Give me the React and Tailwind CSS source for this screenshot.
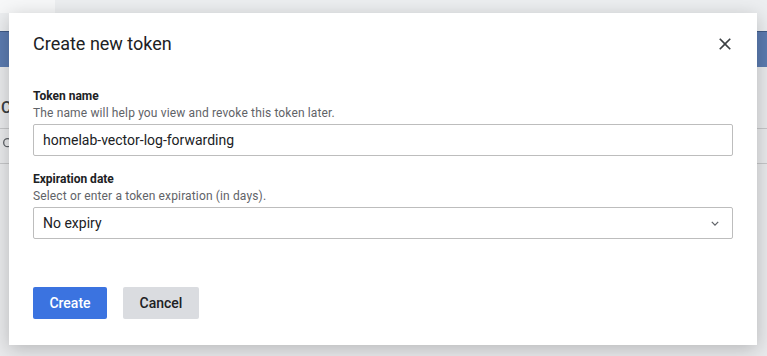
import React from 'react';

const CloseIcon = () => (
    <svg viewBox="0 0 24 24" className="w-5 h-5" fill="#3c4043">
        <path d="M19 6.41 17.59 5 12 10.59 6.41 5 5 6.41 10.59 12 5 17.59 6.41 19 12 13.41 17.59 19 19 17.59 13.41 12z" />
    </svg>
);

const Chevron = () => (
    <svg viewBox="0 0 10 6" className="w-[8px] h-[5px]" fill="none" stroke="#5f6368" strokeWidth="1.6">
        <path d="M1 1l4 4 4-4" />
    </svg>
);

const Field = ({ label, hint, children }) => (
    <div className="flex flex-col">
        <label className="text-[12px] leading-4 font-bold text-[#202124]">{label}</label>
        <p className="text-[12px] leading-4 tracking-[0.14px] text-[#5f6368] mt-[1px]">{hint}</p>
        <div className="mt-[3px]">{children}</div>
    </div>
);

export default function App() {
    return (
        <div className="relative w-full h-[356px] overflow-hidden bg-[#e9eaec] font-['Roboto',sans-serif]">
            {/* page behind the dialog */}
            <div className="flex flex-col">
                <div className="h-[31px] bg-[#eceef0]">
                    <div className="w-[55px] h-[13px] bg-[#f6f7f8]"></div>
                </div>
                <div className="h-[36px] bg-[#5b7bb0] border-t border-[#3f5a86]"></div>
                <div className="pt-[31px] pl-[1px] text-[16px] leading-5 font-medium text-[#3c4043]">C</div>
                <div className="mt-[10px] h-px bg-[#c6c7c9]"></div>
                <div className="h-[34px] flex items-center pl-[1px] pb-[4px]">
                    <svg viewBox="0 0 24 24" className="w-[16px] h-[16px]" fill="none" stroke="#5f6368" strokeWidth="2">
                        <circle cx="10" cy="10" r="6" />
                        <path d="M15 15l5 5" />
                    </svg>
                </div>
                <div className="h-px bg-[#c6c7c9]"></div>
            </div>

            {/* dialog */}
            <div className="absolute left-[9px] top-[13px] w-[748px] h-[332px] bg-white shadow-[0_4px_18px_rgba(0,0,0,0.22)] px-6 pt-[19px]">
                <div className="flex items-center justify-between h-6">
                    <h2 className="text-[18px] leading-6 text-[#202124]">Create new token</h2>
                    <button className="-mr-[2px]"><CloseIcon /></button>
                </div>

                <div className="mt-8 flex flex-col gap-[15px]">
                    <Field label="Token name" hint="The name will help you view and revoke this token later.">
                        <div className="h-8 flex items-center border border-[#bdbdbd] rounded-[2px] px-[9px] text-[14px] text-[#202124]">
                            homelab-vector-log-forwarding
                        </div>
                    </Field>
                    <Field label="Expiration date" hint="Select or enter a token expiration (in days).">
                        <div className="h-8 flex items-center justify-between border border-[#bdbdbd] rounded-[2px] pl-[9px] pr-[13px] text-[14px] text-[#202124]">
                            <span>No expiry</span>
                            <Chevron />
                        </div>
                    </Field>
                </div>

                <div className="mt-12 flex gap-4">
                    <button className="w-[74px] h-8 rounded-[2px] bg-[#3b73e0] text-white text-[14px] font-medium">Create</button>
                    <button className="w-[76px] h-8 rounded-[2px] bg-[#dadce0] text-[#202124] text-[14px] font-medium">Cancel</button>
                </div>
            </div>
        </div>
    );
}
